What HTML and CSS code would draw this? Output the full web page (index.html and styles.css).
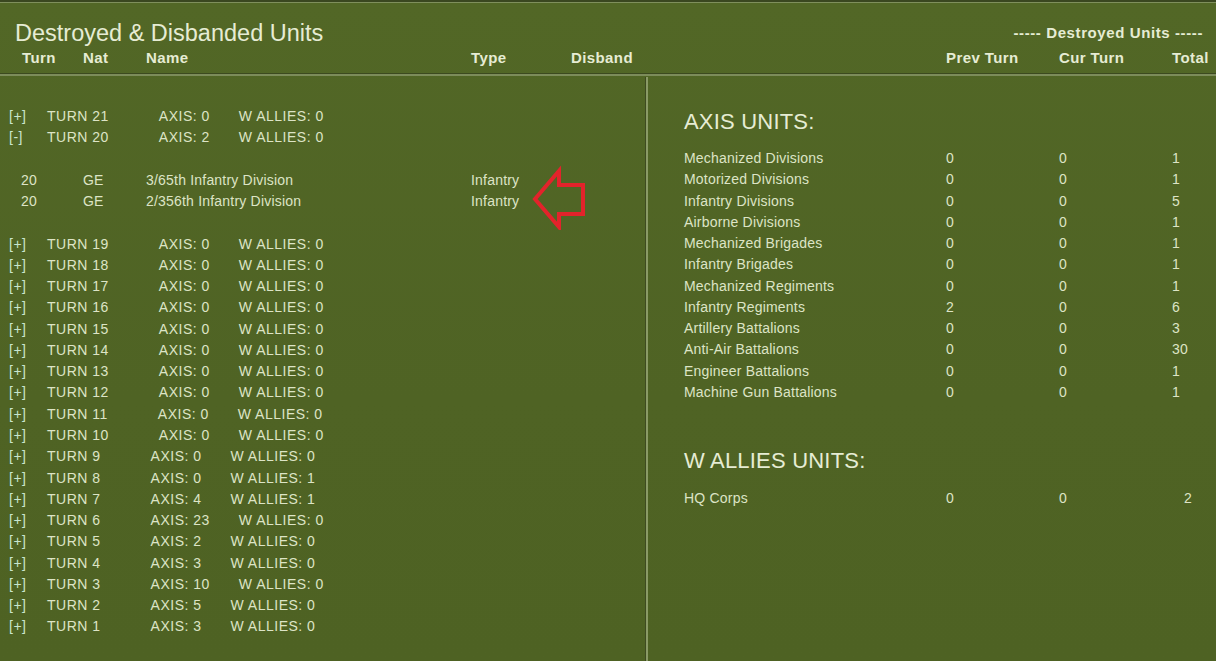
FILE: index.html
```html
<!DOCTYPE html>
<html lang="en">
<head>
    <meta charset="UTF-8">
    <title>Destroyed &amp; Disbanded Units</title>
    <link rel="stylesheet" href="styles.css">
</head>
<body>
    <div class="screen">
        <div class="header">
            <div class="header-left">
                <div class="title">Destroyed &amp; Disbanded Units</div>
                <div class="cols left-cols">
                    <span>Turn</span>
                    <span>Nat</span>
                    <span>Name</span>
                    <span>Type</span>
                    <span>Disband</span>
                </div>
            </div>
            <div class="header-right">
                <div class="subtitle">----- Destroyed Units -----</div>
                <div class="cols right-cols">
                    <span></span>
                    <span>Prev Turn</span>
                    <span>Cur Turn</span>
                    <span>Total</span>
                </div>
            </div>
        </div>

        <div class="panels">
            <div class="panel turns">
                <div class="turn"><span class="toggle">[+]</span><span class="turn-no">TURN 21</span><span class="axis">AXIS: 0</span><span class="allies">W ALLIES: 0</span></div>
                <div class="turn"><span class="toggle">[-]</span><span class="turn-no">TURN 20</span><span class="axis">AXIS: 2</span><span class="allies">W ALLIES: 0</span></div>
                <div class="blank"></div>
                <div class="unit"><span>20</span><span>GE</span><span>3/65th Infantry Division</span><span>Infantry</span></div>
                <div class="unit"><span>20</span><span>GE</span><span>2/356th Infantry Division</span><span>Infantry</span></div>
                <div class="blank"></div>
                <div class="turn"><span class="toggle">[+]</span><span class="turn-no">TURN 19</span><span class="axis">AXIS: 0</span><span class="allies">W ALLIES: 0</span></div>
                <div class="turn"><span class="toggle">[+]</span><span class="turn-no">TURN 18</span><span class="axis">AXIS: 0</span><span class="allies">W ALLIES: 0</span></div>
                <div class="turn"><span class="toggle">[+]</span><span class="turn-no">TURN 17</span><span class="axis">AXIS: 0</span><span class="allies">W ALLIES: 0</span></div>
                <div class="turn"><span class="toggle">[+]</span><span class="turn-no">TURN 16</span><span class="axis">AXIS: 0</span><span class="allies">W ALLIES: 0</span></div>
                <div class="turn"><span class="toggle">[+]</span><span class="turn-no">TURN 15</span><span class="axis">AXIS: 0</span><span class="allies">W ALLIES: 0</span></div>
                <div class="turn"><span class="toggle">[+]</span><span class="turn-no">TURN 14</span><span class="axis">AXIS: 0</span><span class="allies">W ALLIES: 0</span></div>
                <div class="turn"><span class="toggle">[+]</span><span class="turn-no">TURN 13</span><span class="axis">AXIS: 0</span><span class="allies">W ALLIES: 0</span></div>
                <div class="turn"><span class="toggle">[+]</span><span class="turn-no">TURN 12</span><span class="axis">AXIS: 0</span><span class="allies">W ALLIES: 0</span></div>
                <div class="turn"><span class="toggle">[+]</span><span class="turn-no">TURN 11</span><span class="axis">AXIS: 0</span><span class="allies">W ALLIES: 0</span></div>
                <div class="turn"><span class="toggle">[+]</span><span class="turn-no">TURN 10</span><span class="axis">AXIS: 0</span><span class="allies">W ALLIES: 0</span></div>
                <div class="turn"><span class="toggle">[+]</span><span class="turn-no">TURN 9</span><span class="axis">AXIS: 0</span><span class="allies">W ALLIES: 0</span></div>
                <div class="turn"><span class="toggle">[+]</span><span class="turn-no">TURN 8</span><span class="axis">AXIS: 0</span><span class="allies">W ALLIES: 1</span></div>
                <div class="turn"><span class="toggle">[+]</span><span class="turn-no">TURN 7</span><span class="axis">AXIS: 4</span><span class="allies">W ALLIES: 1</span></div>
                <div class="turn"><span class="toggle">[+]</span><span class="turn-no">TURN 6</span><span class="axis">AXIS: 23</span><span class="allies">W ALLIES: 0</span></div>
                <div class="turn"><span class="toggle">[+]</span><span class="turn-no">TURN 5</span><span class="axis">AXIS: 2</span><span class="allies">W ALLIES: 0</span></div>
                <div class="turn"><span class="toggle">[+]</span><span class="turn-no">TURN 4</span><span class="axis">AXIS: 3</span><span class="allies">W ALLIES: 0</span></div>
                <div class="turn"><span class="toggle">[+]</span><span class="turn-no">TURN 3</span><span class="axis">AXIS: 10</span><span class="allies">W ALLIES: 0</span></div>
                <div class="turn"><span class="toggle">[+]</span><span class="turn-no">TURN 2</span><span class="axis">AXIS: 5</span><span class="allies">W ALLIES: 0</span></div>
                <div class="turn"><span class="toggle">[+]</span><span class="turn-no">TURN 1</span><span class="axis">AXIS: 3</span><span class="allies">W ALLIES: 0</span></div>

                <!-- annotation arrow drawn over the list -->
                <svg class="arrow" width="60" height="70" viewBox="0 0 60 70">
                    <polygon points="6,39 30,11 30,25 54,25 54,54 30,54 30,67" fill="none" stroke="#e3232b" stroke-width="4" stroke-linejoin="miter"/>
                </svg>
            </div>

            <div class="divider"></div>

            <div class="panel summary">
                <div class="side-title">AXIS UNITS:</div>
                <div class="stat"><span>Mechanized Divisions</span><span>0</span><span>0</span><span>1</span></div>
                <div class="stat"><span>Motorized Divisions</span><span>0</span><span>0</span><span>1</span></div>
                <div class="stat"><span>Infantry Divisions</span><span>0</span><span>0</span><span>5</span></div>
                <div class="stat"><span>Airborne Divisions</span><span>0</span><span>0</span><span>1</span></div>
                <div class="stat"><span>Mechanized Brigades</span><span>0</span><span>0</span><span>1</span></div>
                <div class="stat"><span>Infantry Brigades</span><span>0</span><span>0</span><span>1</span></div>
                <div class="stat"><span>Mechanized Regiments</span><span>0</span><span>0</span><span>1</span></div>
                <div class="stat"><span>Infantry Regiments</span><span>2</span><span>0</span><span>6</span></div>
                <div class="stat"><span>Artillery Battalions</span><span>0</span><span>0</span><span>3</span></div>
                <div class="stat"><span>Anti-Air Battalions</span><span>0</span><span>0</span><span>30</span></div>
                <div class="stat"><span>Engineer Battalions</span><span>0</span><span>0</span><span>1</span></div>
                <div class="stat"><span>Machine Gun Battalions</span><span>0</span><span>0</span><span>1</span></div>

                <div class="side-title allies-title">W ALLIES UNITS:</div>
                <div class="stat"><span>HQ Corps</span><span>0</span><span>0</span><span class="shifted">2</span></div>
            </div>
        </div>
    </div>
</body>
</html>
```

FILE: styles.css
```css
html, body {
    margin: 0;
    height: 100%;
}

body {
    font-family: "Liberation Sans", Arial, sans-serif;
    background-color: #506425;
    color: #dde4c6;
    overflow: hidden;
}

.screen {
    height: 661px;
    display: flex;
    flex-direction: column;
    border-top: 2px solid #3a4720;
    box-shadow: inset 0 1px 0 #7f8f5c;
    background: linear-gradient(180deg, #526726 0%, #4f6324 60%, #4e6223 100%);
}

/* header */

.header {
    display: flex;
    height: 71px;
    border-bottom: 1px solid #3c4a1f;
    box-shadow: 0 2px 0 #7d8c5b;
    flex-shrink: 0;
}

.header-left {
    width: 646px;
    padding-top: 17px;
    box-sizing: border-box;
}

.header-right {
    flex: 1;
    padding-top: 17px;
}

.title {
    font-size: 23.5px;
    line-height: 28px;
    padding-left: 15px;
    color: #e6ecd4;
}

.subtitle {
    font-size: 15px;
    font-weight: bold;
    letter-spacing: 0.6px;
    line-height: 28px;
    text-align: right;
    padding-right: 13px;
    color: #e6ecd4;
}

.cols {
    display: grid;
    font-size: 15px;
    font-weight: bold;
    letter-spacing: 0.4px;
    line-height: 20px;
    margin-top: 1px;
    color: #e6ecd4;
}

.left-cols {
    grid-template-columns: 61px 63px 325px 100px auto;
    padding-left: 22px;
}

.right-cols {
    grid-template-columns: 300px 113px 113px auto;
}

/* panels */

.panels {
    flex: 1;
    display: flex;
    margin-top: 3px;
}

.panel {
    font-size: 14px;
    line-height: 21.27px;
    letter-spacing: 0.2px;
}

.turns {
    position: relative;
    width: 645px;
    padding-top: 29px;
}

.divider {
    width: 1px;
    background-color: #3e4b20;
    border-right: 2px solid #8a9a66;
}

.summary {
    flex: 1;
    padding-top: 30px;
    padding-left: 36px;
}

.turn {
    display: flex;
    white-space: pre;
    letter-spacing: 0.5px;
}

.toggle {
    width: 38px;
    padding-left: 9px;
    color: #c9e6cf;
}

.axis {
    margin-left: 50px;
}

.allies {
    margin-left: 29px;
}

.blank {
    height: 21.27px;
}

.unit {
    display: grid;
    grid-template-columns: 62px 63px 325px auto;
    padding-left: 21px;
}

.side-title {
    font-size: 22px;
    line-height: 30px;
    margin-bottom: 11px;
    letter-spacing: 0.2px;
    color: #e6ecd4;
}

.allies-title {
    margin-top: 43px;
    margin-bottom: 12px;
}

.stat {
    display: grid;
    grid-template-columns: 262px 113px 113px auto;
}

.shifted {
    padding-left: 12px;
}

.arrow {
    position: absolute;
    left: 529px;
    top: 83px;
}
```
